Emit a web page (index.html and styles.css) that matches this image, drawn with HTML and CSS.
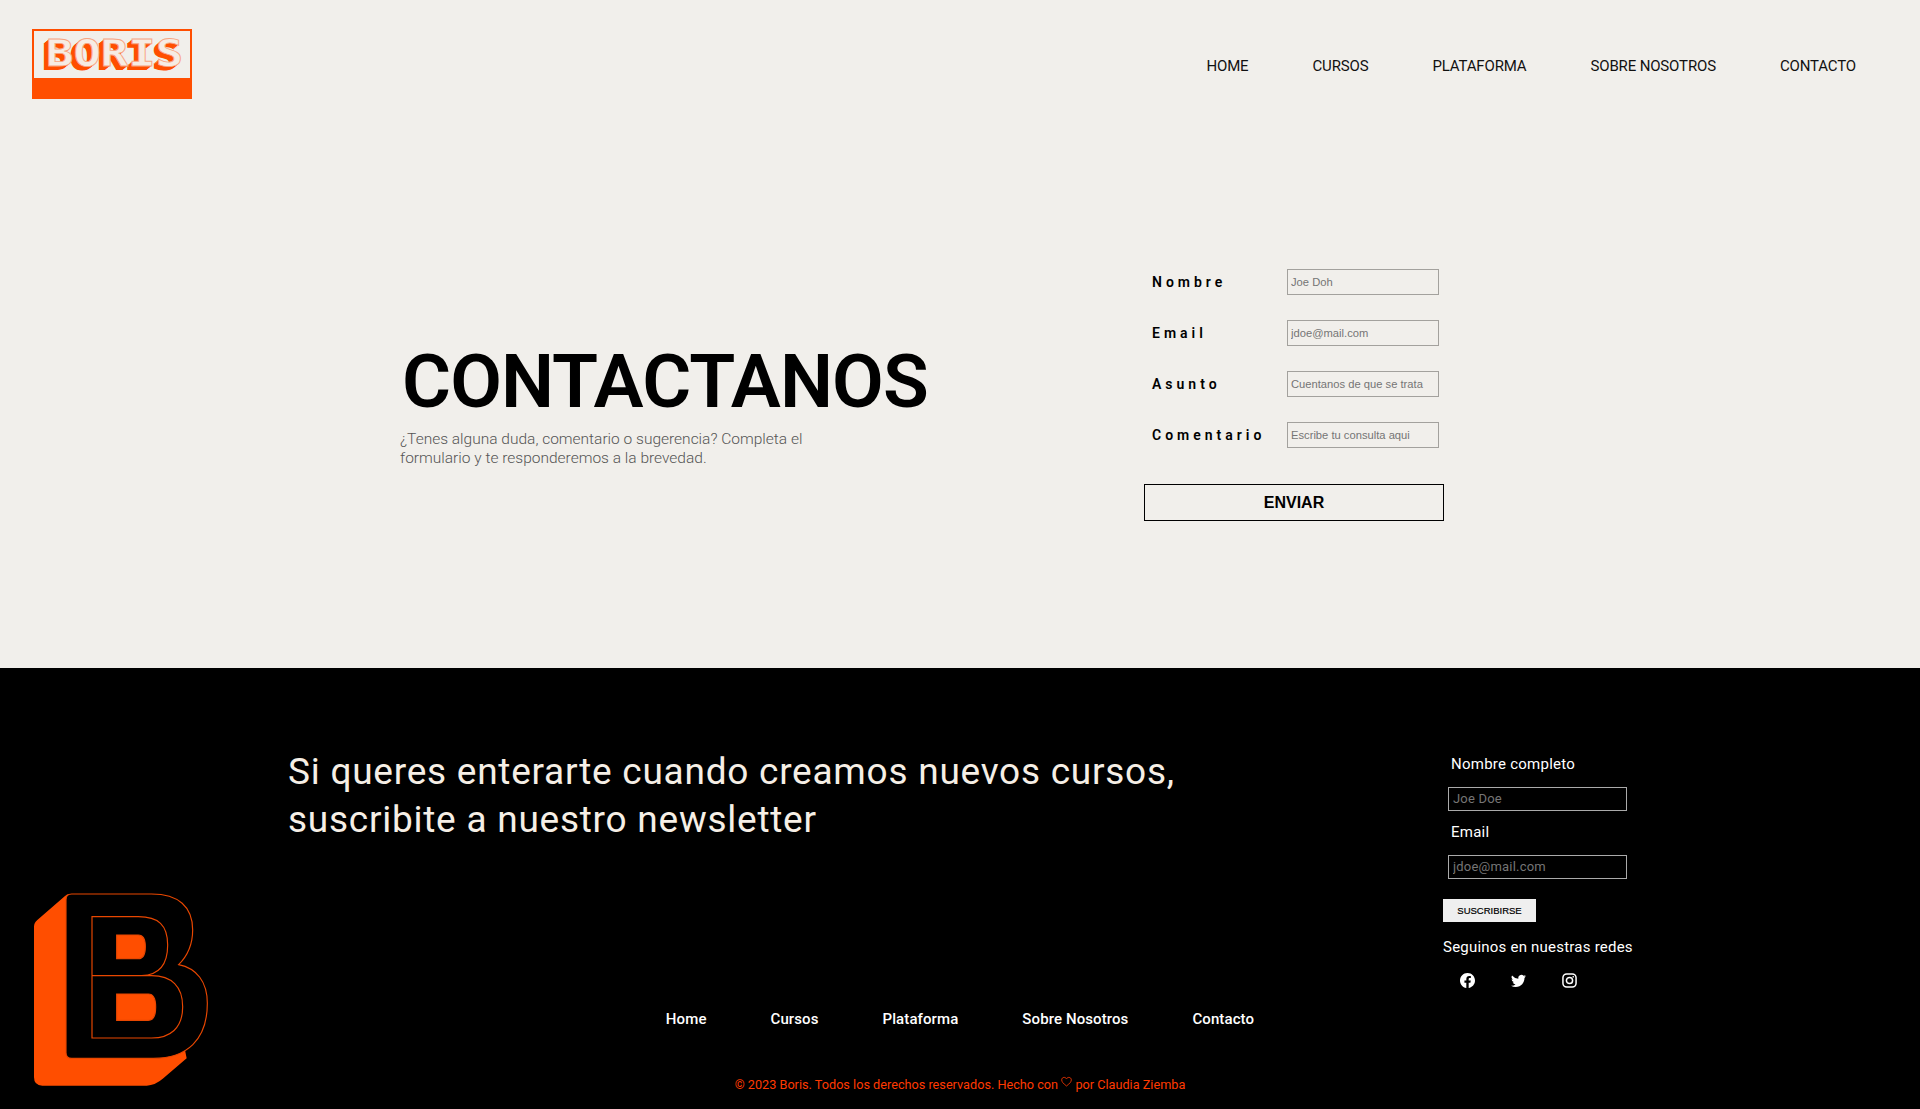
FILE: index.html
```html
<!DOCTYPE html>
<html lang="es">
<head>
<meta charset="UTF-8">
<meta name="viewport" content="width=device-width, initial-scale=1.0">
<title>Boris - Contacto</title>
<link rel="stylesheet" href="styles.css">
</head>
<body>
<header class="site-header">
  <a class="brand" href="#"><span class="brand-name">BORIS</span></a>
  <nav class="main-nav">
    <a href="#">HOME</a>
    <a href="#">CURSOS</a>
    <a href="#">PLATAFORMA</a>
    <a href="#">SOBRE NOSOTROS</a>
    <a href="#">CONTACTO</a>
  </nav>
</header>

<main class="contact">
  <section class="contact-intro">
    <h1>CONTACTANOS</h1>
    <p>¿Tenes alguna duda, comentario o sugerencia? Completa el formulario y te responderemos a la brevedad.</p>
  </section>
  <form class="contact-form">
    <div class="field"><label for="nombre">Nombre</label><input id="nombre" type="text" placeholder="Joe Doh"></div>
    <div class="field"><label for="email">Email</label><input id="email" type="text" placeholder="jdoe@mail.com"></div>
    <div class="field"><label for="asunto">Asunto</label><input id="asunto" type="text" placeholder="Cuentanos de que se trata"></div>
    <div class="field"><label for="comentario">Comentario</label><input id="comentario" type="text" placeholder="Escribe tu consulta aqui"></div>
    <button type="button" class="send">ENVIAR</button>
  </form>
</main>

<footer class="site-footer">
  <svg class="footer-logo" viewBox="0 0 600 660" aria-hidden="true">
    <path class="logo-side" d="M42 140 Q42 128 52 120 L135 48 Q140 42 150 42 L400 42 L500 535 L430 595 Q405 617 380 617 L67 617 Q42 617 42 592 Z"/>
    <path class="logo-face" fill-rule="evenodd" d="M155 42 H395 C475 42 518 80 518 150 C518 195 505 225 476 254 C530 265 562 305 562 370 C562 480 500 535 400 535 H155 Q138 535 138 518 V59 Q138 42 155 42 Z M290 165 V236 H355 Q376 236 376 200 Q376 165 355 165 Z M290 342 V421 H385 Q407 421 407 381 Q407 342 385 342 Z"/>
    <path class="logo-line" d="M216 110 H355 C415 110 443 135 443 195 C443 250 420 285 365 287 H216 Z M216 287 H395 C455 287 488 320 488 380 C488 445 450 474 395 474 H216 Z"/>
  </svg>

  <div class="newsletter-row">
    <h2>Si queres enterarte cuando creamos nuevos cursos, suscribite a nuestro newsletter</h2>
    <div class="newsletter-side">
      <form class="newsletter-form">
        <label for="nl-nombre">Nombre completo</label>
        <input id="nl-nombre" type="text" placeholder="Joe Doe">
        <label for="nl-email">Email</label>
        <input id="nl-email" type="text" placeholder="jdoe@mail.com">
        <button type="button" class="subscribe">SUSCRIBIRSE</button>
      </form>
      <p class="follow">Seguinos en nuestras redes</p>
      <div class="socials">
        <a href="#" aria-label="Facebook">
          <svg viewBox="0 0 16 16"><path d="M16 8.049c0-4.446-3.582-8.05-8-8.05C3.58 0-.002 3.603-.002 8.05c0 4.017 2.926 7.347 6.75 7.951v-5.625h-2.03V8.05H6.75V6.275c0-2.017 1.195-3.131 3.022-3.131.876 0 1.791.157 1.791.157v1.98h-1.009c-.993 0-1.303.621-1.303 1.258v1.51h2.218l-.354 2.326H9.25V16c3.824-.604 6.75-3.934 6.75-7.951z"/></svg>
        </a>
        <a href="#" aria-label="Twitter">
          <svg viewBox="0 0 16 16"><path d="M5.026 15c6.038 0 9.341-5.003 9.341-9.334 0-.14 0-.282-.006-.422A6.685 6.685 0 0 0 16 3.542a6.658 6.658 0 0 1-1.889.518 3.301 3.301 0 0 0 1.447-1.817 6.533 6.533 0 0 1-2.087.793A3.286 3.286 0 0 0 7.875 6.03a9.325 9.325 0 0 1-6.767-3.429 3.289 3.289 0 0 0 1.018 4.382A3.323 3.323 0 0 1 .64 6.575v.045a3.288 3.288 0 0 0 2.632 3.218 3.203 3.203 0 0 1-.865.115 3.23 3.23 0 0 1-.614-.057 3.283 3.283 0 0 0 3.067 2.277A6.588 6.588 0 0 1 .78 13.58a6.32 6.32 0 0 1-.78-.045A9.344 9.344 0 0 0 5.026 15z"/></svg>
        </a>
        <a href="#" aria-label="Instagram">
          <svg viewBox="0 0 16 16" class="outline"><rect x="1" y="1" width="14" height="14" rx="4"/><circle cx="8" cy="8" r="3.3"/><circle class="dot" cx="12" cy="4" r=".9"/></svg>
        </a>
      </div>
    </div>
  </div>

  <nav class="footer-nav">
    <a href="#">Home</a>
    <a href="#">Cursos</a>
    <a href="#">Plataforma</a>
    <a href="#">Sobre Nosotros</a>
    <a href="#">Contacto</a>
  </nav>
  <p class="copyright">© 2023 Boris. Todos los derechos reservados. Hecho con
    <svg class="heart" viewBox="0 0 16 16"><path d="M8 14.5C3 10.8 1 8.3 1 5.6 1 3.5 2.6 2 4.5 2 6 2 7.3 2.8 8 4.2 8.7 2.8 10 2 11.5 2 13.4 2 15 3.5 15 5.6 15 8.3 13 10.8 8 14.5Z"/></svg>
    por Claudia Ziemba</p>
</footer>
</body>
</html>
```

FILE: styles.css
```css
* {
  box-sizing: border-box;
}
body {
  font-family: 'Roboto', sans-serif;
  background-color: #f1efeb;
  color: #000;
  margin: 0;
  padding: 0;
}
a {
  text-decoration: none;
  color: inherit;
}

/* header */
.site-header {
  display: flex;
  justify-content: space-between;
  align-items: flex-start;
  height: 130px;
  padding: 29px 64px 0 32px;
}
.brand {
  display: block;
  width: 160px;
  height: 70px;
  border: 2px solid #ff4e00;
  border-bottom-width: 21px;
  background-color: #f1efeb;
  text-align: center;
}
.brand-name {
  display: inline-block;
  padding-left: 4px;
  font-family: 'DejaVu Sans Mono', monospace;
  font-weight: 700;
  font-size: 38px;
  line-height: 44px;
  color: #f6ece4;
  -webkit-text-stroke: .8px #f7a583;
  text-shadow: -1px 1px 0 #ff4e00, -2px 2px 0 #ff4e00, -3px 3px 0 #ff4e00, -4px 4px 0 #ff4e00;
  transform: scaleX(1.2);
}
.main-nav {
  display: flex;
  gap: 64px;
  padding-top: 27px;
  font-size: 15px;
  line-height: 20px;
  letter-spacing: -.15px;
  color: #111;
}

/* contact */
.contact {
  display: flex;
  height: 538px;
  padding-left: 400px;
}
.contact-intro {
  width: 744px;
  padding-top: 207px;
}
.contact-intro h1 {
  margin: 0 0 0 2px;
  font-size: 75px;
  font-weight: 600;
  line-height: 88px;
  letter-spacing: -.9px;
}
.contact-intro p {
  width: 420px;
  margin: 5px 0 0;
  font-size: 15.5px;
  font-weight: 300;
  line-height: 19px;
  color: #555;
}
.contact-form {
  width: 300px;
  padding-top: 139px;
}
.field {
  display: flex;
  align-items: center;
  height: 26px;
  margin-bottom: 25px;
  padding-left: 8px;
}
.field label {
  width: 135px;
  font-size: 14px;
  font-weight: 600;
  letter-spacing: 4px;
}
.field input {
  width: 152px;
  height: 26px;
  padding: 0 3px;
  border: 1px solid #a3a19d;
  background: transparent;
  font-family: 'Liberation Sans', sans-serif;
  font-size: 11.2px;
}
.field input::placeholder {
  color: #757575;
}
.send {
  display: block;
  width: 300px;
  height: 37px;
  margin-top: 36px;
  border: 1.5px solid #000;
  background: transparent;
  font-family: 'Liberation Sans', sans-serif;
  font-size: 16px;
  font-weight: 700;
  color: #000;
}

/* footer */
.site-footer {
  display: grid;
  grid-template-rows: 332px 38px 1fr;
  height: 441px;
  background-color: #000;
  color: #fff;
}
.footer-logo {
  grid-column: 1;
  grid-row: 1 / 4;
  align-self: end;
  width: 200px;
  height: 220px;
  margin: 0 0 9px 20px;
}
.logo-side {
  fill: #ff4e00;
}
.logo-face {
  fill: #000;
  stroke: #e84700;
  stroke-width: 3.5;
}
.logo-line {
  fill: none;
  stroke: #e84700;
  stroke-width: 3.5;
}
.newsletter-row {
  grid-column: 1;
  grid-row: 1;
  display: flex;
  padding-left: 288px;
}
.newsletter-row h2 {
  width: 1155px;
  padding-right: 220px;
  margin: 0;
  padding-top: 80px;
  font-size: 37px;
  font-weight: 400;
  line-height: 48px;
  letter-spacing: .75px;
  color: #f6efe6;
}
.newsletter-side {
  padding-top: 86px;
}
.newsletter-form {
  display: flex;
  flex-direction: column;
  align-items: flex-start;
}
.newsletter-form label {
  margin-left: 8px;
  font-size: 15px;
  line-height: 20px;
  letter-spacing: .25px;
}
.newsletter-form input {
  width: 179px;
  height: 24px;
  margin: 13px 0 11px 5px;
  padding: 0 4px 2px;
  border: 1px solid #aaa;
  background: #000;
  color: #fff;
  font-family: 'Roboto', sans-serif;
  font-size: 13px;
  letter-spacing: .2px;
}
.subscribe {
  width: 93px;
  height: 23px;
  margin-top: 9px;
  padding: 0;
  border: 0;
  background-color: #efefef;
  font-family: 'Liberation Sans', sans-serif;
  font-size: 9.5px;
  color: #000;
  -webkit-text-stroke: .2px #000;
}
.follow {
  margin: 15px 0 0;
  font-size: 15px;
  line-height: 20px;
  letter-spacing: .22px;
}
.socials {
  display: flex;
  gap: 36px;
  margin: 16px 0 0 17px;
}
.socials a {
  display: block;
  width: 15px;
  height: 15px;
}
.socials svg {
  display: block;
  width: 15px;
  height: 15px;
  fill: #fff;
}
.socials svg.outline {
  fill: none;
  stroke: #fff;
  stroke-width: 1.6;
}
.socials svg .dot {
  fill: #fff;
  stroke: none;
}
.footer-nav {
  grid-column: 1;
  grid-row: 2;
  display: flex;
  justify-content: center;
  align-items: center;
  gap: 64px;
  font-size: 15px;
  font-weight: 500;
  letter-spacing: .1px;
}
.copyright {
  grid-column: 1;
  grid-row: 3;
  margin: 38px 0 0;
  text-align: center;
  font-size: 12.7px;
  line-height: 16px;
  color: #ff3a00;
}
.heart {
  display: inline-block;
  width: 11px;
  height: 11px;
  vertical-align: 2px;
  fill: none;
  stroke: #ff3a00;
  stroke-width: 1.2;
}
```
